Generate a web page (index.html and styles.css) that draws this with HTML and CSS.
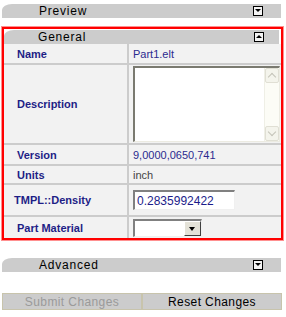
FILE: index.html
```html
<!DOCTYPE html>
<html lang="en">
<head>
    <meta charset="UTF-8">
    <title>Properties</title>
    <link rel="stylesheet" href="styles.css">
</head>
<body>

    <div class="panel">
        <div class="panel-bar">
            <span class="bar-title">Preview</span>
            <span class="toggle down"></span>
        </div>

        <div class="section active">
            <div class="panel-bar">
                <span class="bar-title">General</span>
                <span class="toggle up"></span>
            </div>
            <table class="props">
                <tr class="row-name">
                    <td class="label">Name</td>
                    <td class="value">Part1.elt</td>
                </tr>
                <tr class="row-desc">
                    <td class="label">Description</td>
                    <td class="value">
                        <div class="textarea">
                            <div class="scroll">
                                <span class="arrow up-arrow"></span>
                                <span class="arrow down-arrow"></span>
                            </div>
                        </div>
                    </td>
                </tr>
                <tr class="row-version">
                    <td class="label">Version</td>
                    <td class="value version">9,0000,0650,741</td>
                </tr>
                <tr class="row-units">
                    <td class="label">Units</td>
                    <td class="value units">inch</td>
                </tr>
                <tr class="row-density">
                    <td class="label tight">TMPL::Density</td>
                    <td class="value"><input class="text-field" type="text" value="0.2835992422"></td>
                </tr>
                <tr class="row-material">
                    <td class="label">Part Material</td>
                    <td class="value">
                        <div class="select">
                            <span class="select-text"></span>
                            <span class="select-btn"></span>
                        </div>
                    </td>
                </tr>
            </table>
        </div>

        <div class="panel-bar advanced">
            <span class="bar-title">Advanced</span>
            <span class="toggle down"></span>
        </div>

        <div class="actions">
            <button class="btn disabled">Submit Changes</button>
            <button class="btn">Reset Changes</button>
        </div>
    </div>

</body>
</html>
```

FILE: styles.css
```css
* {
    margin: 0;
    padding: 0;
    box-sizing: border-box;
}

body {
    background: #ffffff;
    font-family: "DejaVu Sans", Verdana, sans-serif;
}

.panel {
    width: 284px;
    padding: 4px 0 0 2px;
}

.panel-bar {
    display: flex;
    align-items: center;
    justify-content: space-between;
    width: 279px;
    height: 14px;
    background: #cccccc;
    border-top-left-radius: 10px 6px;
    padding: 0 18px 0 37px;
}

.bar-title {
    font-family: "Liberation Sans", Arial, sans-serif;
    font-size: 12px;
    letter-spacing: 0.8px;
    color: #000000;
}

.toggle {
    position: relative;
    width: 10px;
    height: 10px;
    border: 1px solid #000000;
    background: #f4f4f4;
}

.toggle::after {
    content: "";
    position: absolute;
    left: 1px;
    border-left: 3px solid transparent;
    border-right: 3px solid transparent;
}

.toggle.down::after {
    top: 2px;
    border-top: 3px solid #000000;
}

.toggle.up::after {
    top: 2px;
    border-bottom: 3px solid #000000;
}

.section {
    margin-top: 9px;
    width: 281px;
    border: 2px solid #ff0000;
    box-shadow: 0 0 0 1px #ff9090;
    padding: 1px 0 0 0;
}

.section .panel-bar {
    width: 275px;
    padding-left: 34px;
    padding-right: 15px;
}

.props {
    width: 277px;
    border-collapse: separate;
    border-spacing: 0;
    background: #f2f2f2;
    font-family: "Liberation Sans", Arial, sans-serif;
    font-size: 11px;
}

.props td {
    border-top: 2px solid #cccccc;
    vertical-align: middle;
}

.props tr:first-child td {
    border-top: none;
}

.label {
    width: 125px;
    padding-left: 13px;
    font-weight: bold;
    color: #1e1e86;
    border-right: 2px solid #cccccc;
}

.label.tight {
    padding-left: 10px;
}

.value {
    padding-left: 4px;
    color: #2b2b8f;
}

.value.units {
    color: #444444;
}

.row-name td {
    height: 19px;
}

.row-desc td {
    height: 80px;
}

.row-version td {
    height: 21px;
}

.row-units td {
    height: 19px;
}

.row-density td {
    height: 32px;
}

.row-material td {
    height: 23px;
}

.textarea {
    display: flex;
    justify-content: flex-end;
    width: 147px;
    height: 76px;
    background: #ffffff;
    border: 1px solid #ecebe2;
    border-top: 2px solid #7a7a70;
    border-left: 2px solid #7a7a70;
}

.scroll {
    display: flex;
    flex-direction: column;
    justify-content: space-between;
    width: 15px;
    background: #fcfcf6;
    border-left: 1px solid #efefe6;
}

.arrow {
    position: relative;
    height: 15px;
    background: #f4f4ec;
    border: 1px solid #e0dfd4;
    border-radius: 2px;
}

.arrow::after {
    content: "";
    position: absolute;
    left: 3px;
    width: 5px;
    height: 5px;
    border-left: 1.5px solid #c4c3b8;
    border-top: 1.5px solid #c4c3b8;
}

.up-arrow::after {
    top: 5px;
    transform: rotate(45deg);
}

.down-arrow::after {
    top: 2px;
    transform: rotate(225deg);
}

.text-field {
    display: block;
    width: 102px;
    height: 20px;
    padding: 0 2px;
    font-family: "Liberation Sans", Arial, sans-serif;
    font-size: 12px;
    color: #1c1c8a;
    background: #ffffff;
    border: 1px solid #f0f0f0;
    border-top: 2px solid #808080;
    border-left: 2px solid #808080;
    outline: none;
}

.select {
    display: flex;
    width: 69px;
    height: 18px;
    background: #ffffff;
    border: 1px solid #f0f0f0;
    border-top: 2px solid #808080;
    border-left: 2px solid #808080;
}

.select-text {
    flex: 1;
}

.select-btn {
    position: relative;
    width: 17px;
    background: #e4e2d8;
    border: 1px solid #ffffff;
    border-right-color: #404040;
    border-bottom-color: #404040;
}

.select-btn::after {
    content: "";
    position: absolute;
    left: 4px;
    top: 5px;
    border-left: 3.5px solid transparent;
    border-right: 3.5px solid transparent;
    border-top: 4px solid #000000;
}

.advanced {
    margin-top: 18px;
}

.actions {
    display: flex;
    width: 280px;
    margin-top: 21px;
}

.btn {
    flex: 1;
    height: 17px;
    background: #cccccc;
    border: 1px solid #e8e6d8;
    border-top-color: #d8d4c0;
    font-family: "Liberation Sans", Arial, sans-serif;
    font-size: 12px;
    letter-spacing: 0.4px;
    color: #000000;
    cursor: pointer;
    outline: 1px solid #c8c4ac;
    outline-offset: -1px;
}

.btn.disabled {
    color: #9a9a9a;
}
```
